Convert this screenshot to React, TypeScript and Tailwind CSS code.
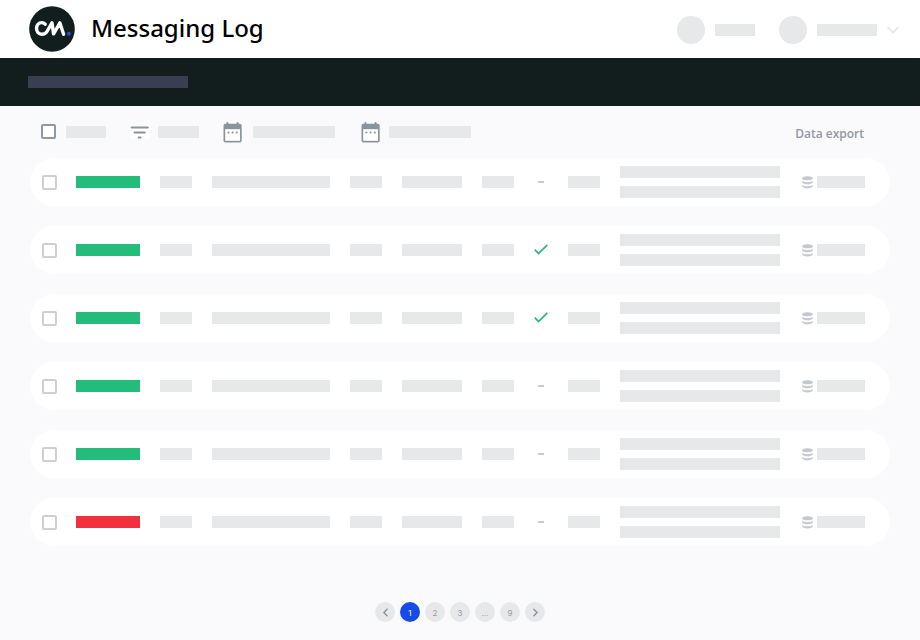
import { ChevronDown, ChevronLeft, ChevronRight } from "lucide-react";

interface LogRow {
  id: number;
  status: "delivered" | "failed";
  read: boolean;
}

const rows: LogRow[] = [
  { id: 1, status: "delivered", read: false },
  { id: 2, status: "delivered", read: true },
  { id: 3, status: "delivered", read: true },
  { id: 4, status: "delivered", read: false },
  { id: 5, status: "delivered", read: false },
  { id: 6, status: "failed", read: false },
];

const pages = ["1", "2", "3", "...", "9"];

function Bar({ className }: { className: string }) {
  return <div className={`h-3 ${className}`} />;
}

function Logo() {
  return (
    <svg viewBox="0 0 46 46" className="size-[46px]" role="img" aria-label="CM">
      <circle cx="23" cy="23" r="22.8" fill="#121e1d" />
      <g fill="none" stroke="#fff" strokeWidth="3.4" strokeLinecap="round" strokeLinejoin="round">
        <path d="M16.2 18.2C15.2 17.1 14 16.6 12.7 16.6C9.6 16.6 7.6 19 7.6 22.5C7.6 26 9.7 28.3 12.8 28.3C15 28.3 16.8 27.6 18 25.5L23 16.9L24.6 27.9L30.9 16.9L34.6 28.3" />
      </g>
      <circle cx="39.9" cy="27.7" r="2" fill="#1f4be0" />
    </svg>
  );
}

function FilterIcon() {
  return (
    <svg viewBox="0 0 20 14" className="h-[14px] w-5" aria-hidden="true">
      <rect width="20" height="14" fill="#fff" />
      <g stroke="#8a949c" strokeWidth="2" strokeLinecap="round">
        <path d="M1.6 2.4H17.8" />
        <path d="M4.6 7.5H14.8" />
        <path d="M8.6 12.4H10.6" />
      </g>
    </svg>
  );
}

function CalendarIcon() {
  return (
    <svg viewBox="0 0 20 22" className="h-[22px] w-5" aria-hidden="true">
      <path d="M4.4 2V5M14.6 2V5" stroke="#8a949c" strokeWidth="2" strokeLinecap="round" />
      <rect x=".5" y="2.8" width="18.2" height="18.6" rx="2" fill="#8a949c" />
      <rect x="2.2" y="8.2" width="14.8" height="11.6" fill="#fff" />
      <g fill="#8a949c">
        <circle cx="5.4" cy="11.5" r="1.1" />
        <circle cx="9.6" cy="11.5" r="1.1" />
        <circle cx="13.8" cy="11.5" r="1.1" />
      </g>
    </svg>
  );
}

function DatabaseIcon() {
  return (
    <svg viewBox="0 0 11 13" className="h-[13px] w-[11px]" fill="#c5c8cd" aria-hidden="true">
      <ellipse cx="5.5" cy="2.3" rx="5.3" ry="2" />
      <path d="M.2 4.8C1.6 6.6 9.4 6.6 10.8 4.8V6.4C9.6 8.8 1.4 8.8 .2 6.4Z" />
      <path d="M.2 9C1.6 10.8 9.4 10.8 10.8 9V10.6C9.6 13 1.4 13 .2 10.6Z" />
    </svg>
  );
}

function CheckIcon() {
  return (
    <svg viewBox="0 0 14 12" className="h-3 w-[14px]" role="img" aria-label="Read">
      <path d="M.8 5.6L4.6 9.6L13.3 .8" fill="none" stroke="#2cb67d" strokeWidth="1.7" />
    </svg>
  );
}

export default function App() {
  return (
    <div className="min-h-screen bg-[#fafafc] pb-4 font-['Noto_Sans',sans-serif]">
      <header className="flex h-[58px] items-center justify-between bg-white pr-[21px] pb-px pl-[29px]">
        <div className="flex items-center gap-4">
          <Logo />
          <h1 className="pb-[2px] text-2xl leading-8 font-medium text-black">Messaging Log</h1>
        </div>
        <div className="flex items-center gap-6 pt-[3px]">
          <div className="flex items-center gap-[10px]">
            <div className="size-7 rounded-full bg-[#e7e8ea]" />
            <Bar className="w-10 bg-[#e7e8ea]" />
          </div>
          <button type="button" aria-label="Account" className="flex items-center gap-[10px]">
            <span className="size-7 rounded-full bg-[#e7e8ea]" />
            <span className="h-3 w-[60px] bg-[#e7e8ea]" />
            <ChevronDown size={20} strokeWidth={2} className="-mx-1 text-[#e3e4e7]" />
          </button>
        </div>
      </header>

      <nav className="flex h-12 items-center bg-[#121e1d] px-7">
        <Bar className="w-40 bg-[#383f50]" />
      </nav>

      <main className="px-[30px]">
        <div className="flex h-9 items-end justify-between pr-[26px] pl-[11px]">
          <div className="flex h-5 items-center">
            <input
              type="checkbox"
              aria-label="Select all"
              className="mb-px size-[15px] appearance-none rounded-xs border-2 border-[#9298a1] bg-white checked:bg-[#8a949c]"
            />
            <Bar className="ml-[10px] w-10 bg-[#e7e8ea]" />
            <button type="button" aria-label="Filter" className="ml-6 flex items-center gap-2">
              <FilterIcon />
              <span className="h-3 w-[41px] bg-[#e7e8ea]" />
            </button>
            <button type="button" aria-label="From date" className="ml-6 flex items-center gap-[10px]">
              <CalendarIcon />
              <span className="h-3 w-[82px] bg-[#e7e8ea]" />
            </button>
            <button type="button" aria-label="To date" className="ml-[26px] flex items-center gap-2">
              <CalendarIcon />
              <span className="h-3 w-[82px] bg-[#e7e8ea]" />
            </button>
          </div>
          <a
            href="#export"
            className="font-['Open_Sans',sans-serif] text-xs leading-4 font-semibold text-[#9297a0]"
          >
            Data export
          </a>
        </div>

        <table
          aria-label="Messages"
          className="-mt-1 w-full table-fixed border-separate border-spacing-x-0 border-spacing-y-5"
        >
          <colgroup>
            <col className="w-[46px]" />
            <col className="w-[84px]" />
            <col className="w-[52px]" />
            <col className="w-[138px]" />
            <col className="w-[52px]" />
            <col className="w-[80px]" />
            <col className="w-[52px]" />
            <col className="w-[34px]" />
            <col className="w-[52px]" />
            <col />
            <col className="w-[88px]" />
          </colgroup>
          <tbody>
            {rows.map((row) => (
              <tr key={row.id} className="h-12 *:bg-white *:p-0 *:align-middle">
                <td className="rounded-l-full">
                  <input
                    type="checkbox"
                    aria-label={`Select message ${row.id}`}
                    className="ml-3 block size-[15px] appearance-none rounded-xs border-2 border-[#cdcfd3] bg-white checked:bg-[#cdcfd3]"
                  />
                </td>
                <td>
                  <Bar className={row.status === "failed" ? "w-16 bg-[#ef323e]" : "w-16 bg-[#24bc7a]"} />
                </td>
                <td>
                  <Bar className="w-8 bg-[#e7e8ea]" />
                </td>
                <td>
                  <Bar className="w-[118px] bg-[#e7e8ea]" />
                </td>
                <td>
                  <Bar className="w-8 bg-[#e7e8ea]" />
                </td>
                <td>
                  <Bar className="w-[60px] bg-[#e7e8ea]" />
                </td>
                <td>
                  <Bar className="w-8 bg-[#e7e8ea]" />
                </td>
                <td>
                  <div className="flex w-[14px] justify-center">
                    {row.read ? <CheckIcon /> : <span className="h-[2px] w-[6px] bg-[#c8cacd]" />}
                  </div>
                </td>
                <td>
                  <Bar className="w-8 bg-[#e7e8ea]" />
                </td>
                <td>
                  <div className="flex flex-col gap-2 pr-[22px]">
                    <Bar className="w-full bg-[#e7e8ea]" />
                    <Bar className="w-full bg-[#e7e8ea]" />
                  </div>
                </td>
                <td className="rounded-r-full">
                  <div className="flex items-center gap-1">
                    <DatabaseIcon />
                    <Bar className="w-12 bg-[#e7e8ea]" />
                  </div>
                </td>
              </tr>
            ))}
          </tbody>
        </table>
      </main>

      <nav
        aria-label="Pagination"
        className="mt-9 flex justify-center gap-[5px] font-[Inter,sans-serif] text-[8px] leading-3 text-[#9a9ea5]"
      >
        <button
          type="button"
          aria-label="Previous page"
          className="flex size-5 items-center justify-center rounded-full bg-[#e7e8ea]"
        >
          <ChevronLeft size={13} strokeWidth={2.6} className="text-[#8b9098]" />
        </button>
        {pages.map((page) => (
          <button
            key={page}
            type="button"
            className={
              page === "1"
                ? "flex size-5 items-center justify-center rounded-full bg-[#174be6] pt-[2px] text-white"
                : "flex size-5 items-center justify-center rounded-full bg-[#e7e8ea] pt-[2px]"
            }
          >
            {page}
          </button>
        ))}
        <button
          type="button"
          aria-label="Next page"
          className="flex size-5 items-center justify-center rounded-full bg-[#e7e8ea]"
        >
          <ChevronRight size={13} strokeWidth={2.6} className="text-[#8b9098]" />
        </button>
      </nav>
    </div>
  );
}
